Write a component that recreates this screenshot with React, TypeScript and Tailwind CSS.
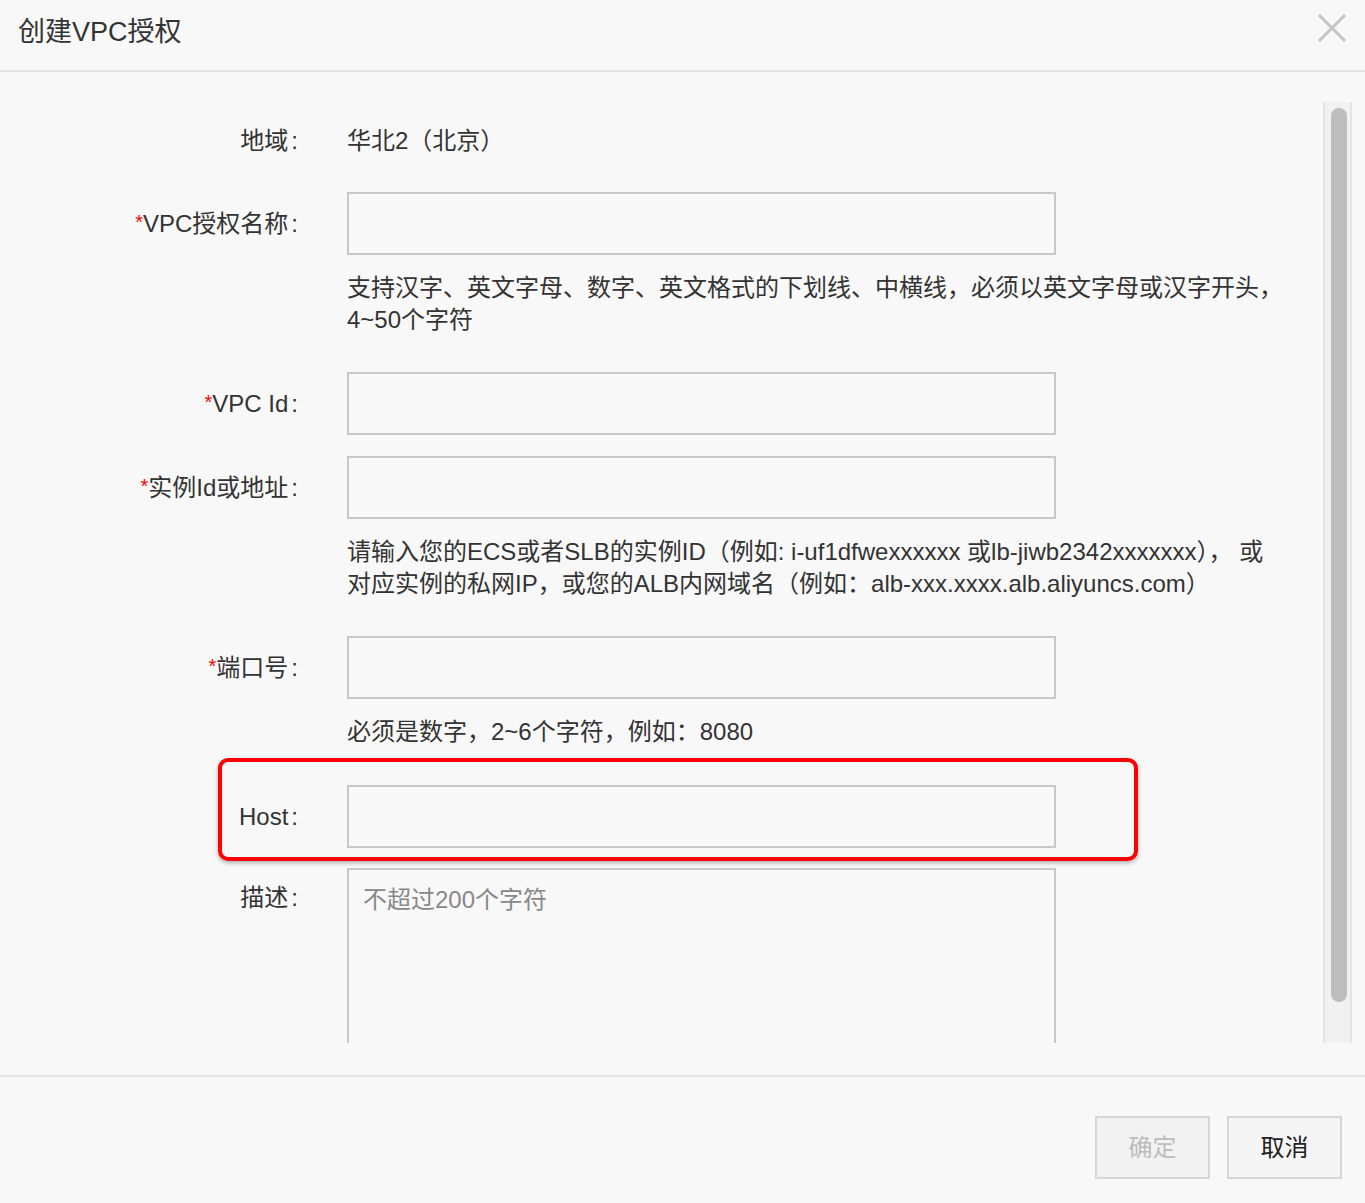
import React from 'react';

const Label: React.FC<{ text: string; required?: boolean; tall?: boolean }> = ({ text, required, tall }) => (
  <div className={`w-[298px] shrink-0 flex justify-end text-[24px] text-[#333] ${tall ? 'h-[63px] items-center' : 'h-[32px] items-center'}`}>
    {required && <span className="text-[#ff0000] text-[20px] self-center -mt-[4px]">*</span>}
    <span>{text}</span>
    <span className="ml-[3px]">:</span>
  </div>
);

const Input: React.FC = () => (
  <input className="ml-[49px] w-[709px] h-[63px] border-2 border-[#c8c8c8] bg-transparent outline-none px-[14px] text-[24px]" />
);

const Help: React.FC<{ lines: string[]; className?: string }> = ({ lines, className }) => (
  <div className={`ml-[347px] text-[24px] leading-[32px] text-[#333] whitespace-pre ${className ?? ''}`}>
    {lines.map((l, i) => (
      <div key={i}>{l}</div>
    ))}
  </div>
);

export default function App() {
  return (
    <div className="h-[1203px] w-full bg-[#f8f8f8] flex flex-col font-['Liberation_Sans','Noto_Sans_CJK_SC',sans-serif] text-[#333]">
      {/* Header */}
      <div className="h-[72px] shrink-0 border-b-2 border-[#e3e3e3] flex items-center justify-between pl-[18px] pr-[18px]">
        <div className="text-[27px] text-[#333] -mt-[6px]">创建VPC授权</div>
        <svg width="30" height="30" viewBox="0 0 30 30" className="-mt-[14px]">
          <path d="M2 2 L28 28 M28 2 L2 28" stroke="#c4c4c4" strokeWidth="3" />
        </svg>
      </div>

      {/* Body */}
      <div className="flex-1 pt-[30px] pb-[32px] flex flex-col">
        <div className="h-[941px] flex">
          <div className="flex-1 overflow-hidden">
            {/* 地域 */}
            <div className="flex mt-[23px]">
              <Label text="地域" />
              <div className="ml-[49px] text-[24px] leading-[32px] text-[#333]">华北2（北京）</div>
            </div>

            {/* VPC授权名称 */}
            <div className="flex items-center mt-[35px]">
              <Label text="VPC授权名称" required tall />
              <Input />
            </div>
            <Help
              className="mt-[17px]"
              lines={['支持汉字、英文字母、数字、英文格式的下划线、中横线，必须以英文字母或汉字开头，', '4~50个字符']}
            />

            {/* VPC Id */}
            <div className="flex items-center mt-[36px]">
              <Label text="VPC Id" required tall />
              <Input />
            </div>

            {/* 实例Id或地址 */}
            <div className="flex items-center mt-[21px]">
              <Label text="实例Id或地址" required tall />
              <Input />
            </div>
            <Help
              className="mt-[17px]"
              lines={[
                '请输入您的ECS或者SLB的实例ID（例如: i-uf1dfwexxxxxx 或lb-jiwb2342xxxxxxx）， 或',
                '对应实例的私网IP，或您的ALB内网域名（例如：alb-xxx.xxxx.alb.aliyuncs.com）',
              ]}
            />

            {/* 端口号 */}
            <div className="flex items-center mt-[36px]">
              <Label text="端口号" required tall />
              <Input />
            </div>
            <Help className="mt-[17px]" lines={['必须是数字，2~6个字符，例如：8080']} />

            {/* Host */}
            <div className="relative flex items-center mt-[37px]">
              <Label text="Host" tall />
              <Input />
              <div className="absolute left-[218px] -top-[27px] w-[920px] h-[103px] border-[4px] border-[#ff0000] rounded-[10px] shadow-[0_2px_4px_rgba(0,0,0,0.3)] pointer-events-none" />
            </div>

            {/* 描述 */}
            <div className="flex mt-[20px]">
              <div className="w-[298px] shrink-0 flex justify-end text-[24px] text-[#333] pt-[14px] leading-[32px]">
                <span>描述</span>
                <span className="ml-[3px]">:</span>
              </div>
              <textarea
                className="ml-[49px] w-[709px] h-[240px] border-2 border-[#c8c8c8] bg-transparent outline-none px-[14px] pt-[14px] text-[24px] leading-[32px] resize-none placeholder:text-[#888]"
                placeholder="不超过200个字符"
              />
            </div>
          </div>

          {/* Scrollbar */}
          <div className="w-[29px] mr-[13px] shrink-0 border-x-2 border-[#e4e4e4] bg-[#f1f1f1] pt-[6px]">
            <div className="ml-[6px] w-[16px] h-[894px] rounded-full bg-[#bdbdbd]" />
          </div>
        </div>
      </div>

      {/* Footer */}
      <div className="h-[128px] shrink-0 border-t-2 border-[#e3e3e3] flex justify-end items-start pt-[39px] pr-[23px] gap-[17px]">
        <button className="w-[115px] h-[63px] border-2 border-[#d6d6d6] bg-[#f2f2f2] text-[24px] text-[#bcbcbc]">确定</button>
        <button className="w-[115px] h-[63px] border-2 border-[#d6d6d6] bg-[#f5f5f5] text-[24px] text-[#222]">取消</button>
      </div>
    </div>
  );
}
